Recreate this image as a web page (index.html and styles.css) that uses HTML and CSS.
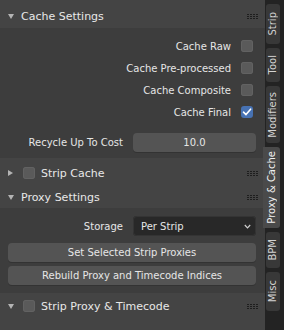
FILE: index.html
```html
<!DOCTYPE html>
<html>
<head>
<meta charset="utf-8">
<link rel="stylesheet" href="styles.css">
</head>
<body>
<div class="app">
  <div class="region">
    <section class="panel">
      <div class="ph ph-cache">
        <span class="tri down"></span><span class="title">Cache Settings</span>
        <svg class="grip" width="11" height="5" viewBox="0 0 11 5"><g fill="#1e1e1e"><rect x="0" y="0" width="2" height="1"/><rect x="3" y="0" width="2" height="1"/><rect x="6" y="0" width="2" height="1"/><rect x="9" y="0" width="2" height="1"/><rect x="0" y="2" width="2" height="1"/><rect x="3" y="2" width="2" height="1"/><rect x="6" y="2" width="2" height="1"/><rect x="9" y="2" width="2" height="1"/><rect x="0" y="4" width="2" height="1"/><rect x="3" y="4" width="2" height="1"/><rect x="6" y="4" width="2" height="1"/><rect x="9" y="4" width="2" height="1"/></g></svg>
      </div>
      <div class="pb pb-cache">
        <div class="crow"><span>Cache Raw</span><span class="cb"></span></div>
        <div class="crow"><span>Cache Pre-processed</span><span class="cb"></span></div>
        <div class="crow"><span>Cache Composite</span><span class="cb"></span></div>
        <div class="crow"><span>Cache Final</span><span class="cb on"><svg width="12" height="12" viewBox="0 0 12 12"><polyline points="2.5,6.2 5,8.6 9.6,3.2" fill="none" stroke="#fff" stroke-width="1.6" stroke-linecap="round" stroke-linejoin="round"/></svg></span></div>
        <div class="frow frow-gap"><span class="lbl">Recycle Up To Cost</span><span class="num">10.0</span></div>
      </div>
    </section>
    <section class="panel">
      <div class="ph ph-strip">
        <span class="tri right"></span><span class="cb hcb"></span><span class="title">Strip Cache</span>
        <svg class="grip" width="11" height="5" viewBox="0 0 11 5"><g fill="#1e1e1e"><rect x="0" y="0" width="2" height="1"/><rect x="3" y="0" width="2" height="1"/><rect x="6" y="0" width="2" height="1"/><rect x="9" y="0" width="2" height="1"/><rect x="0" y="2" width="2" height="1"/><rect x="3" y="2" width="2" height="1"/><rect x="6" y="2" width="2" height="1"/><rect x="9" y="2" width="2" height="1"/><rect x="0" y="4" width="2" height="1"/><rect x="3" y="4" width="2" height="1"/><rect x="6" y="4" width="2" height="1"/><rect x="9" y="4" width="2" height="1"/></g></svg>
      </div>
    </section>
    <section class="panel">
      <div class="ph ph-proxy">
        <span class="tri down"></span><span class="title">Proxy Settings</span>
        <svg class="grip" width="11" height="5" viewBox="0 0 11 5"><g fill="#1e1e1e"><rect x="0" y="0" width="2" height="1"/><rect x="3" y="0" width="2" height="1"/><rect x="6" y="0" width="2" height="1"/><rect x="9" y="0" width="2" height="1"/><rect x="0" y="2" width="2" height="1"/><rect x="3" y="2" width="2" height="1"/><rect x="6" y="2" width="2" height="1"/><rect x="9" y="2" width="2" height="1"/><rect x="0" y="4" width="2" height="1"/><rect x="3" y="4" width="2" height="1"/><rect x="6" y="4" width="2" height="1"/><rect x="9" y="4" width="2" height="1"/></g></svg>
      </div>
      <div class="pb pb-proxy">
        <div class="frow"><span class="lbl">Storage</span><span class="drop"><span>Per Strip</span><svg width="7" height="5" viewBox="0 0 7 5"><polyline points="0.8,1 3.5,3.8 6.2,1" fill="none" stroke="#cfcfcf" stroke-width="1.2"/></svg></span></div>
        <div class="btn btn-first">Set Selected Strip Proxies</div>
        <div class="btn">Rebuild Proxy and Timecode Indices</div>
      </div>
    </section>
    <section class="panel panel-last">
      <div class="ph ph-tc">
        <span class="tri down"></span><span class="cb hcb hcb-down"></span><span class="title">Strip Proxy &amp; Timecode</span>
        <svg class="grip" width="11" height="5" viewBox="0 0 11 5"><g fill="#1e1e1e"><rect x="0" y="0" width="2" height="1"/><rect x="3" y="0" width="2" height="1"/><rect x="6" y="0" width="2" height="1"/><rect x="9" y="0" width="2" height="1"/><rect x="0" y="2" width="2" height="1"/><rect x="3" y="2" width="2" height="1"/><rect x="6" y="2" width="2" height="1"/><rect x="9" y="2" width="2" height="1"/><rect x="0" y="4" width="2" height="1"/><rect x="3" y="4" width="2" height="1"/><rect x="6" y="4" width="2" height="1"/><rect x="9" y="4" width="2" height="1"/></g></svg>
      </div>
    </section>
  </div>
  <nav class="tabs">
    <div class="tab t-strip"><span>Strip</span></div>
    <div class="tab t-tool"><span>Tool</span></div>
    <div class="tab t-mod"><span>Modifiers</span></div>
    <div class="tab t-proxy active"><span>Proxy &amp; Cache</span></div>
    <div class="tab t-bpm"><span>BPM</span></div>
    <div class="tab t-misc"><span>Misc</span></div>
  </nav>
</div>
</body>
</html>
```

FILE: styles.css
```css
* { box-sizing: border-box; }
html, body { margin: 0; padding: 0; }
body {
  width: 284px;
  height: 330px;
  overflow: hidden;
  background: #232323;
  font-family: "DejaVu Sans", sans-serif;
  color: #e6e6e6;
}
.app {
  display: flex;
  width: 284px;
  height: 330px;
}
.region {
  width: 265px;
  display: flex;
  flex-direction: column;
  background: #3d3d3d;
}
.panel { display: flex; flex-direction: column; }
.panel-last { flex: 1; background: #444444; }

.ph {
  display: flex;
  align-items: center;
  background: #444444;
  padding-left: 8px;
  padding-right: 7px;
  font-size: 11px;
  color: #e8e8e8;
}
.ph-cache { height: 28px; padding-top: 4px; }
.ph-strip { height: 26px; padding-top: 4px; }
.ph-proxy { height: 24px; padding-top: 2px; }
.ph-tc { height: 26px; }
.title { white-space: nowrap; }
.grip { margin-left: auto; display: block; }

.tri { display: block; width: 0; height: 0; flex: none; }
.tri.down {
  border-left: 3px solid transparent;
  border-right: 3px solid transparent;
  border-top: 5px solid #b4b4b4;
  margin-right: 7px;
}
.tri.right {
  border-top: 3px solid transparent;
  border-bottom: 3px solid transparent;
  border-left: 5px solid #b4b4b4;
  margin-right: 10px;
}
.hcb { margin-right: 6px; }
.hcb-down { margin-left: 2px; }

.cb {
  display: block;
  flex: none;
  width: 12px;
  height: 12px;
  border-radius: 3px;
  background: #5a5a5a;
  box-shadow: inset 0 0 0 1px #626262;
}
.cb.on { background: #4772b3; box-shadow: none; }
.cb svg { display: block; }

.pb { font-size: 10px; color: #e6e6e6; }
.pb-cache { padding: 7px 0 6px; }
.crow {
  height: 22px;
  display: flex;
  align-items: center;
  justify-content: flex-end;
  gap: 10px;
  padding-right: 12px;
  white-space: nowrap;
}
.frow {
  display: grid;
  grid-template-columns: 115px 123px;
  column-gap: 10px;
  padding-left: 8px;
  height: 20px;
  align-items: center;
}
.frow-gap { margin-top: 10px; height: 19px; }
.lbl { text-align: right; white-space: nowrap; }
.num {
  height: 19px;
  border-radius: 4px;
  background: #545454;
  box-shadow: 0 1px 0 #333333;
  display: flex;
  align-items: center;
  justify-content: center;
}
.pb-proxy { padding: 8px 0 8px; }
.drop {
  height: 20px;
  border-radius: 4px;
  background: #282828;
  box-shadow: inset 0 0 0 1px #343434;
  display: flex;
  align-items: center;
  justify-content: space-between;
  padding: 0 5px 0 8px;
}
.drop svg { display: block; }
.btn {
  margin: 4px 9px 0 8px;
  height: 19px;
  border-radius: 4px;
  background: #545454;
  box-shadow: 0 1px 0 #333333;
  display: flex;
  align-items: center;
  justify-content: center;
  white-space: nowrap;
}
.btn-first { margin-top: 7px; }

.tabs {
  width: 19px;
  background: #232323;
  display: flex;
  flex-direction: column;
  gap: 4px;
  padding-top: 4px;
}
.tab {
  margin-left: 1px;
  width: 14px;
  background: #383838;
  border-radius: 3px;
  font-size: 10px;
  color: #d4d4d4;
  display: flex;
  align-items: center;
  justify-content: center;
  flex: none;
}
.t-strip { height: 40px; }
.t-tool { height: 34px; }
.t-mod { height: 57px; }
.t-proxy { height: 81px; }
.t-bpm { height: 36px; }
.t-misc { height: 39px; }
.tab span {
  writing-mode: vertical-rl;
  transform: rotate(180deg);
  line-height: 14px;
  white-space: nowrap;
}
.tab.active {
  margin-left: -2px;
  width: 17px;
  background: #4a4a4a;
  color: #f0f0f0;
  border-radius: 0 3px 3px 0;
}
```
